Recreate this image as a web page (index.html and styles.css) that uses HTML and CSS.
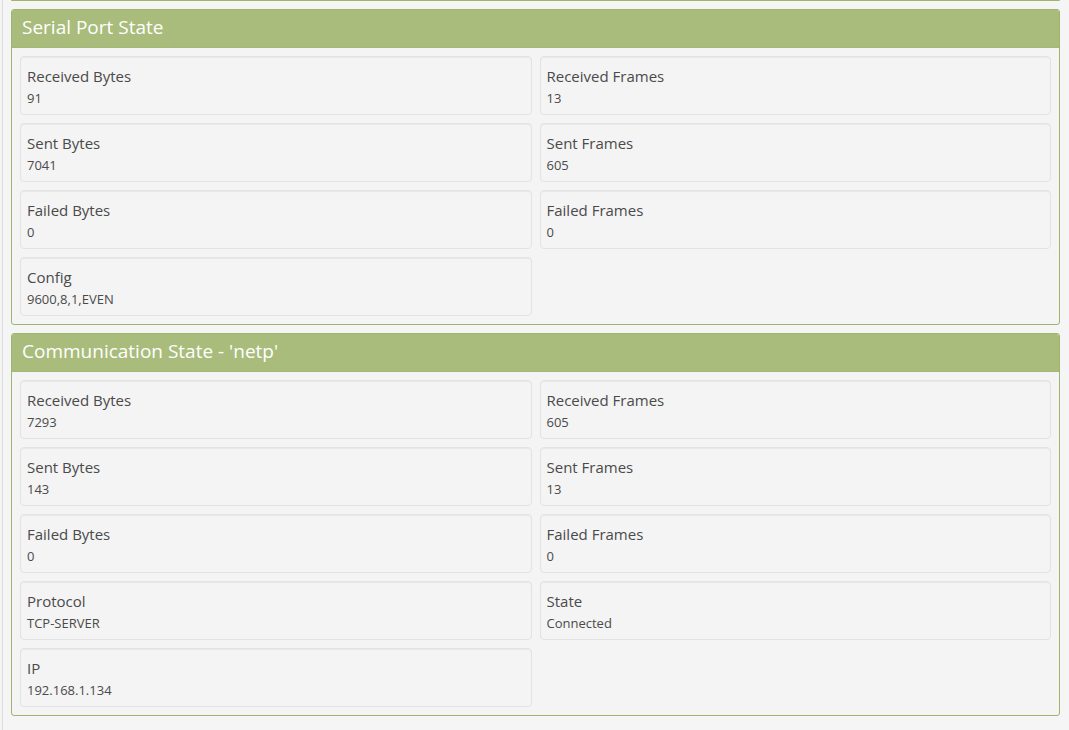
FILE: index.html
```html
<!DOCTYPE html>
<html lang="en">
<head>
  <meta charset="UTF-8">
  <meta name="viewport" content="width=device-width, initial-scale=1.0">
  <title>Device State</title>
  <link rel="stylesheet" href="styles.css">
</head>
<body>
  <div class="page">
    <!-- tail of the panel above, scrolled out of view -->
    <div class="panel-tail"></div>

    <div class="panel">
      <div class="panel-heading">Serial Port State</div>
      <div class="panel-body">
        <div class="well"><div class="label">Received Bytes</div><div class="value">91</div></div>
        <div class="well"><div class="label">Received Frames</div><div class="value">13</div></div>
        <div class="well"><div class="label">Sent Bytes</div><div class="value">7041</div></div>
        <div class="well"><div class="label">Sent Frames</div><div class="value">605</div></div>
        <div class="well"><div class="label">Failed Bytes</div><div class="value">0</div></div>
        <div class="well"><div class="label">Failed Frames</div><div class="value">0</div></div>
        <div class="well"><div class="label">Config</div><div class="value">9600,8,1,EVEN</div></div>
      </div>
    </div>

    <div class="panel">
      <div class="panel-heading">Communication State - 'netp'</div>
      <div class="panel-body">
        <div class="well"><div class="label">Received Bytes</div><div class="value">7293</div></div>
        <div class="well"><div class="label">Received Frames</div><div class="value">605</div></div>
        <div class="well"><div class="label">Sent Bytes</div><div class="value">143</div></div>
        <div class="well"><div class="label">Sent Frames</div><div class="value">13</div></div>
        <div class="well"><div class="label">Failed Bytes</div><div class="value">0</div></div>
        <div class="well"><div class="label">Failed Frames</div><div class="value">0</div></div>
        <div class="well"><div class="label">Protocol</div><div class="value">TCP-SERVER</div></div>
        <div class="well"><div class="label">State</div><div class="value">Connected</div></div>
        <div class="well"><div class="label">IP</div><div class="value">192.168.1.134</div></div>
      </div>
    </div>
  </div>
</body>
</html>
```

FILE: styles.css
```css
body {
  margin: 0;
  background-color: #f4f5f4;
  font-family: "Open Sans", "Noto Sans", Arial, sans-serif;
  color: #4a4a4a;
}
.page {
  margin-left: 2px;
  min-height: 730px;
  border-left: 1px solid #dcdedc;
  padding: 0 9px 0 8px;
}
.panel-tail {
  height: 0;
  border-bottom: 1px solid #9fb56f;
  border-radius: 0 0 3px 3px;
}
.panel {
  margin-top: 8px;
  border: 1px solid #9fb56f;
  border-radius: 3px;
  background-color: #f3f4f3;
}
.panel-heading {
  height: 37px;
  padding: 0 10px;
  background-color: #a9bc7c;
  border-bottom: 1px solid #a4b876;
  color: #fff;
  font-size: 19px;
  line-height: 35px;
  border-radius: 2px 2px 0 0;
}
.panel-body {
  display: grid;
  grid-template-columns: 1fr 1fr;
  gap: 8px;
  padding: 8px;
}
.well {
  height: 57px;
  padding: 0 6px;
  background-color: #f4f4f4;
  border: 1px solid #e3e3e3;
  border-radius: 4px;
  box-shadow: inset 0 1px 1px rgba(0, 0, 0, 0.05);
}
.label {
  margin-top: 9px;
  font-size: 15px;
  line-height: 20px;
}
.value {
  margin-top: 2px;
  font-size: 13px;
  line-height: 20px;
}
```
